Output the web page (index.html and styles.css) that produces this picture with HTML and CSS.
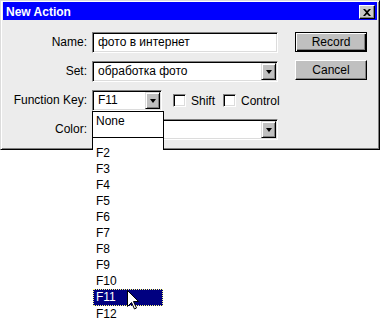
FILE: index.html
```html
<!DOCTYPE html>
<html>
<head>
<meta charset="utf-8">
<link rel="stylesheet" href="styles.css">
</head>
<body>
<div class="dialog">
  <div class="titlebar">
    <span class="title">New Action</span>
    <span class="close"><svg width="8" height="7" viewBox="0 0 8 7"><path d="M0 0h2l2 2 2-2h2L5 3.5 8 7H6L4 5 2 7H0l3-3.5z" fill="#000"/></svg></span>
  </div>
  <div class="form">
    <div class="lbl r1">Name:</div>
    <div class="field r1">фото в интернет</div>
    <div class="buttons">
      <div class="btn default"><span class="face">Record</span></div>
      <div class="btn"><span class="face">Cancel</span></div>
    </div>
    <div class="lbl r2">Set:</div>
    <div class="field select r2">обработка фото<span class="arrow"><i></i></span></div>
    <div class="lbl r3">Function Key:</div>
    <div class="fnrow r3">
      <div class="field select small">F11<span class="arrow"><i></i></span></div>
      <span class="check"></span><span class="cklbl">Shift</span>
      <span class="check"></span><span class="cklbl">Control</span>
    </div>
    <div class="lbl r4">Color:</div>
    <div class="field select r4"><span class="arrow"><i></i></span></div>
  </div>
</div>
<div class="droplist">
  <div class="item">None</div>
  <div class="item"></div>
  <div class="item">F2</div>
  <div class="item">F3</div>
  <div class="item">F4</div>
  <div class="item">F5</div>
  <div class="item">F6</div>
  <div class="item">F7</div>
  <div class="item">F8</div>
  <div class="item">F9</div>
  <div class="item">F10</div>
  <div class="item sel">F11</div>
  <div class="item">F12</div>
</div>
<svg class="cursor" width="13" height="20" viewBox="0 0 13 20"><path d="M0.5 0.5V16.5L4.5 12.5L7.5 19L9.5 18L6.5 11.5H11.5Z" fill="#fff" stroke="#000" stroke-width="1" stroke-linejoin="miter"/></svg>
</body>
</html>
```
FILE: styles.css
```css
html, body {
  margin: 0;
  padding: 0;
  background: #fff;
}
body {
  position: relative;
  width: 381px;
  height: 321px;
  overflow: hidden;
  font-family: "Liberation Sans", Arial, sans-serif;
  font-size: 12px;
  color: #000;
}
.dialog {
  box-sizing: border-box;
  width: 380px;
  height: 150px;
  background: #ececec;
  border: 1px solid;
  border-color: #dcdcdc #000 #000 #dcdcdc;
  box-shadow: inset 1px 1px #fff, inset -1px -1px #808080;
  padding: 1px 2px 0 2px;
}
.titlebar {
  height: 18px;
  background: #0000ff;
  display: flex;
  align-items: center;
  justify-content: space-between;
  padding: 0 2px 0 3px;
}
.title {
  color: #fff;
  font-weight: bold;
  font-size: 12px;
  line-height: 18px;
  padding-top: 1px;
}
.close {
  box-sizing: border-box;
  width: 16px;
  height: 14px;
  margin-top: 2px;
  background: #c8c8c8;
  border: 1px solid;
  border-color: #fff #000 #000 #fff;
  box-shadow: inset -1px -1px #808080;
  display: flex;
  align-items: center;
  justify-content: center;
}
.form {
  display: grid;
  grid-template-columns: 84px 186px 89px;
  grid-template-rows: 21px 21px 21px 21px;
  column-gap: 5px;
  row-gap: 8px;
  margin-top: 12px;
}
.r1 { grid-row: 1; }
.r2 { grid-row: 2; }
.r3 { grid-row: 3; }
.r4 { grid-row: 4; }
.lbl {
  grid-column: 1;
  text-align: right;
  line-height: 21px;
  white-space: nowrap;
}
.field {
  box-sizing: border-box;
  position: relative;
  height: 21px;
  background: #fff;
  border: 1px solid;
  border-color: #808080 #fff #fff #808080;
  box-shadow: inset 1px 1px #000, inset -1px -1px #dcdcdc;
  padding-left: 5px;
  line-height: 19px;
  white-space: nowrap;
}
.form > .field {
  grid-column: 2;
}
.arrow {
  position: absolute;
  right: 1px;
  top: 1px;
  bottom: 1px;
  width: 15px;
  box-sizing: border-box;
  background: #c0c0c0;
  border: 1px solid;
  border-color: #dcdcdc #000 #000 #dcdcdc;
  box-shadow: inset 1px 1px #fff, inset -1px -1px #808080;
  display: flex;
  align-items: center;
  justify-content: center;
}
.arrow i {
  width: 0;
  height: 0;
  border-left: 3.5px solid transparent;
  border-right: 3.5px solid transparent;
  border-top: 4px solid #000;
}
.buttons {
  grid-column: 3;
  grid-row: 1 / span 2;
  align-self: start;
  margin-left: 12px;
  width: 72px;
  display: flex;
  flex-direction: column;
  gap: 8px;
}
.btn {
  box-sizing: border-box;
  height: 20px;
  background: #c0c0c0;
  border: 1px solid;
  border-color: #fff #000 #000 #fff;
  box-shadow: inset -1px -1px #808080;
  text-align: center;
  line-height: 18px;
}
.btn.default {
  border: 1px solid #000;
  box-shadow: inset 1px 1px #fff, inset -1px -1px #000, inset -2px -2px #808080;
}
.fnrow {
  grid-column: 2 / span 2;
  display: flex;
  align-items: center;
}
.field.small {
  width: 70px;
}
.check {
  box-sizing: border-box;
  width: 13px;
  height: 13px;
  background: #fff;
  border: 1px solid;
  border-color: #808080 #fff #fff #808080;
  box-shadow: inset 1px 1px #000, inset -1px -1px #dcdcdc;
  margin-left: 11px;
}
.cklbl {
  margin-left: 5px;
}
.cklbl + .check {
  margin-left: 8px;
}
.droplist {
  position: absolute;
  left: 92px;
  top: 111px;
  width: 72px;
  height: 210px;
  box-sizing: border-box;
  background: #fff;
  padding: 2px 1px 0 1px;
}
.droplist::before {
  content: "";
  position: absolute;
  left: 0;
  top: 0;
  width: 72px;
  height: 27px;
  box-sizing: border-box;
  border: 1px solid #000;
}
.droplist::after {
  content: "";
  position: absolute;
  left: 0;
  top: 26px;
  width: 72px;
  height: 13px;
  box-sizing: border-box;
  border-left: 1px solid #000;
  border-right: 1px solid #000;
}
.item {
  height: 16px;
  line-height: 16px;
  padding-left: 3px;
  width: 70px;
  box-sizing: border-box;
}
.item.sel {
  background: #000080;
  color: #fff;
  outline: 1px dotted #ffff80;
  outline-offset: -1px;
  height: 17px;
}
.cursor {
  position: absolute;
  left: 127px;
  top: 290px;
}
```
